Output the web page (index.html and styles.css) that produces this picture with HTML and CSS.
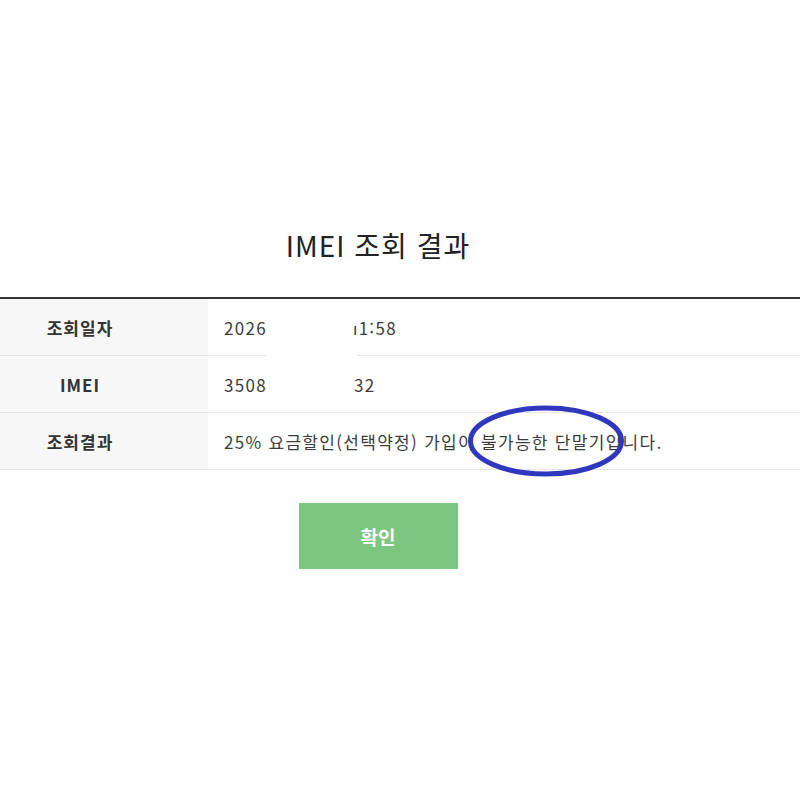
FILE: index.html
```html
<!DOCTYPE html>
<html lang="ko">
<head>
<meta charset="utf-8">
<title>IMEI 조회 결과</title>
<link rel="stylesheet" href="styles.css">
</head>
<body>
<div class="page">
  <h1 class="title">IMEI 조회 결과</h1>
  <div class="table-wrap">
    <div class="row">
      <div class="label">조회일자</div>
      <div class="value"><span>2026</span><span class="gap"></span><span class="cut">ı1:58</span></div>
    </div>
    <div class="row">
      <div class="label">IMEI</div>
      <div class="value"><span>3508</span><span class="gap gap2"></span><span>32</span></div>
    </div>
    <div class="row">
      <div class="label">조회결과</div>
      <div class="value">25% 요금할인(선택약정) 가입이 불가능한 단말기입니다.</div>
    </div>
    <div class="mask"></div>
    <svg class="circle" width="170" height="84" viewBox="0 0 170 84">
      <ellipse cx="85" cy="42" rx="75.5" ry="33" fill="none" stroke="#2f38bd" stroke-width="5"/>
    </svg>
  </div>
  <div class="actions">
    <button class="btn" type="button">확인</button>
  </div>
</div>
</body>
</html>
```
FILE: styles.css
```css
* { box-sizing: border-box; }
html, body { margin: 0; padding: 0; background: #fff; }
body {
  font-family: "Noto Sans CJK KR", "Noto Sans", sans-serif;
  color: #333;
}
.page {
  padding-top: 225px;
}
.title {
  margin: 0 0 32px;
  padding-right: 44px;
  text-align: center;
  font-size: 28px;
  font-weight: 400;
  color: #222;
  line-height: 40px;
  letter-spacing: 1px;
}
.table-wrap {
  position: relative;
  border-top: 2px solid #333;
}
.row {
  display: flex;
  height: 57px;
  border-bottom: 1px solid #e6e6e6;
}
.label {
  width: 208px;
  flex: none;
  background: #f7f7f7;
  display: flex;
  align-items: center;
  justify-content: center;
  padding-right: 48px;
  font-size: 17px;
  font-weight: 700;
  color: #333;
  letter-spacing: 1px;
}
.value {
  flex: 1;
  display: flex;
  align-items: center;
  padding-left: 16px;
  font-size: 17px;
  color: #3d3d3d;
  letter-spacing: 1.3px;
  white-space: nowrap;
}
.gap { display: inline-block; width: 86px; }
.gap2 { width: 87px; }
.mask {
  position: absolute;
  left: 266px;
  top: 53px;
  width: 91px;
  height: 4px;
  background: #fff;
}
.circle {
  position: absolute;
  left: 461px;
  top: 100px;
}
.actions {
  display: flex;
  justify-content: center;
  padding-top: 33px;
  padding-right: 44px;
}
.btn {
  width: 159px;
  height: 66px;
  border: none;
  background: #7dc67f;
  color: #fff;
  font-family: "Noto Sans CJK KR", sans-serif;
  font-size: 19px;
  font-weight: 700;
  cursor: pointer;
}
```
